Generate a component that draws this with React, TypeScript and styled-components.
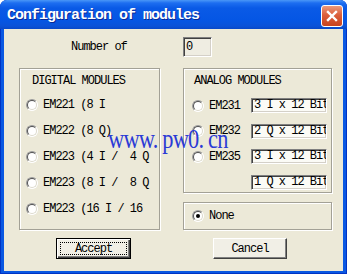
import React from 'react';
import styled, { createGlobalStyle, css } from 'styled-components';

const UI_FONT = `"Liberation Mono", "DejaVu Sans Mono", monospace`;

const GlobalStyle = createGlobalStyle`
  html, body {
    margin: 0;
    padding: 0;
    background: #fff;
  }
  body {
    width: 347px;
    height: 274px;
    overflow: hidden;
  }
`;

const Window = styled.div`
  position: relative;
  width: 347px;
  height: 274px;
  box-sizing: border-box;
  display: flex;
  flex-direction: column;
  background: #0a58e2;
  border-radius: 7px 7px 0 0;
  box-shadow: inset 0 0 0 1px #0033c4;
  overflow: hidden;
  font-family: ${UI_FONT};
  font-size: 12px;
  letter-spacing: -1px;
  color: #000;
`;

const TitleBar = styled.div`
  flex: none;
  height: 29px;
  display: flex;
  align-items: center;
  justify-content: space-between;
  padding: 0 4px 0 7px;
  background: linear-gradient(
    to bottom,
    #4a97f7 0px,
    #1d6ef0 3px,
    #0a5ae6 8px,
    #0556e4 20px,
    #0a52d8 26px,
    #0848c8 29px
  );
`;

const TitleText = styled.div`
  margin-top: 2px;
  font-size: 15px;
  font-weight: bold;
  letter-spacing: -1px;
  color: #fff;
  text-shadow: 1px 1px 0 #0a2a96;
  white-space: nowrap;
`;

const CloseButton = styled.div`
  box-sizing: border-box;
  width: 22px;
  height: 22px;
  margin-top: 3px;
  display: flex;
  align-items: center;
  justify-content: center;
  border: 1px solid #fff;
  border-radius: 3px;
  background: linear-gradient(to bottom, #eb9a7c 0%, #dc5f3c 45%, #c8431f 100%);
`;

const Client = styled.div`
  flex: 1;
  margin: 0 4px 3px;
  padding: 8px 11px 0 15px;
  display: flex;
  flex-direction: column;
  background: #ece9d8;
`;

const Columns = styled.div<{ $top?: number; $height: number }>`
  display: grid;
  grid-template-columns: 141px 149px;
  column-gap: 23px;
  height: ${p => p.$height}px;
  margin-top: ${p => p.$top ?? 0}px;
  align-items: center;
`;

const NumberLabel = styled.div`
  padding-left: 52px;
  line-height: 14px;
`;

const Field = styled.div<{ $width: number; $height: number; $bg: string }>`
  box-sizing: border-box;
  width: ${p => p.$width}px;
  height: ${p => p.$height}px;
  padding-left: 2px;
  border: 1px solid;
  border-color: #7f7f7f #fff #fff #7f7f7f;
  box-shadow: inset 1px 1px 0 #404040, inset -1px -1px 0 #d4d0c8;
  background: ${p => p.$bg};
  line-height: ${p => p.$height - 2}px;
  white-space: pre;
  overflow: hidden;
`;

const GroupBox = styled.div<{ $height: number; $left: number }>`
  box-sizing: border-box;
  height: ${p => p.$height}px;
  padding: 4.5px 0 0 ${p => p.$left}px;
  border: 1px solid #a3a196;
  box-shadow: inset 1px 1px 0 #fff, 1px 1px 0 #fff;
`;

const GroupTitle = styled.div<{ $indent: number; $gap: number }>`
  line-height: 14px;
  margin-left: ${p => p.$indent}px;
  margin-bottom: ${p => p.$gap}px;
  white-space: pre;
`;

const RadioList = styled.div`
  display: flex;
  flex-direction: column;
  gap: 10px;
`;

const RadioRow = styled.div`
  display: flex;
  align-items: center;
  gap: 5px;
  height: 16px;
  white-space: pre;
`;

const RadioDot = styled.span<{ $checked?: boolean }>`
  position: relative;
  flex: none;
  box-sizing: border-box;
  width: 12px;
  height: 12px;
  border-radius: 50%;
  border: 1px solid;
  border-color: #9a9a9a #fff #fff #9a9a9a;
  background: #fff;

  &::before {
    content: '';
    position: absolute;
    inset: 0;
    box-sizing: border-box;
    border-radius: 50%;
    border: 1px solid;
    border-color: #505050 #dcd9cc #dcd9cc #505050;
  }

  ${p =>
    p.$checked &&
    css`
      &::after {
        content: '';
        position: absolute;
        left: 3px;
        top: 3px;
        width: 4px;
        height: 4px;
        border-radius: 50%;
        background: #000;
      }
    `}
`;

const RightColumn = styled.div`
  align-self: start;
  display: flex;
  flex-direction: column;
  gap: 9px;
`;

const AnalogGrid = styled.div`
  display: grid;
  grid-template-columns: 17px 42px 76px;
  grid-auto-rows: 15px;
  row-gap: 10.5px;
  align-items: center;
`;

const AnalogLabel = styled.span`
  line-height: 14px;
  white-space: pre;
`;

const NoneBox = styled(GroupBox)`
  display: flex;
  align-items: center;
  gap: 5px;
  padding-top: 0;
  line-height: 14px;
`;

const Button = styled.div<{ $offset: number; $width: number; $default?: boolean }>`
  position: relative;
  box-sizing: border-box;
  width: ${p => p.$width}px;
  height: 21px;
  margin-left: ${p => p.$offset}px;
  display: flex;
  align-items: center;
  justify-content: center;
  background: #f1efe6;
  border: 1px solid;
  border-color: #fff #404040 #404040 #fff;
  box-shadow: inset -1px -1px 0 #808080;
  line-height: 14px;

  ${p =>
    p.$default &&
    css`
      border-color: #000;
      box-shadow: inset 1px 1px 0 #fff, inset -1px -1px 0 #404040, inset -2px -2px 0 #808080;

      &::after {
        content: '';
        position: absolute;
        inset: 3px;
        border: 1px dotted #000;
      }
    `}
`;

// watermark stamped over the dialog
const Watermark = styled.div`
  position: absolute;
  left: 108px;
  top: 125px;
  font-family: "Liberation Serif", "DejaVu Serif", serif;
  font-size: 28px;
  line-height: 28px;
  letter-spacing: -1px;
  color: #2a3ad6;
  white-space: pre;
  transform: scaleX(0.8);
  transform-origin: left center;
  pointer-events: none;
`;

const digitalModules = [
  'EM221 (8 I',
  'EM222 (8 Q)',
  'EM223 (4 I /  4 Q',
  'EM223 (8 I /  8 Q',
  'EM223 (16 I / 16',
];

const analogModules = [
  { name: 'EM231', spec: '3 I x 12 Bit' },
  { name: 'EM232', spec: '2 Q x 12 Bit' },
  { name: 'EM235', spec: '3 I x 12 Bit' },
  { name: '', spec: '1 Q x 12 Bit' },
];

const App = () => {
  return (
    <>
      <GlobalStyle />
      <Window>
        <TitleBar>
          <TitleText>Configuration of modules</TitleText>
          <CloseButton>
            <svg width="12" height="12" viewBox="0 0 12 12">
              <path d="M2 2 L10 10 M10 2 L2 10" stroke="#fff" strokeWidth="2.4" strokeLinecap="square" />
            </svg>
          </CloseButton>
        </TitleBar>
        <Client>
          <Columns $height={20}>
            <NumberLabel>Number of</NumberLabel>
            <Field $width={29} $height={20} $bg="#efede2">0</Field>
          </Columns>
          <Columns $top={11} $height={162}>
            <GroupBox $height={162} $left={6}>
              <GroupTitle $indent={6} $gap={9.5}>DIGITAL MODULES</GroupTitle>
              <RadioList>
                {digitalModules.map(label => (
                  <RadioRow key={label}>
                    <RadioDot />
                    <span>{label}</span>
                  </RadioRow>
                ))}
              </RadioList>
            </GroupBox>
            <RightColumn>
              <GroupBox $height={125} $left={8}>
                <GroupTitle $indent={2} $gap={10.5}>ANALOG MODULES</GroupTitle>
                <AnalogGrid>
                  {analogModules.map(m => (
                    <React.Fragment key={m.spec + m.name}>
                      {m.name ? <RadioDot /> : <span />}
                      <AnalogLabel>{m.name}</AnalogLabel>
                      <Field $width={76} $height={15} $bg="#fbfbf6">{m.spec}</Field>
                    </React.Fragment>
                  ))}
                </AnalogGrid>
              </GroupBox>
              <NoneBox $height={28} $left={8}>
                <RadioDot $checked />
                <span>None</span>
              </NoneBox>
            </RightColumn>
          </Columns>
          <Columns $top={8} $height={21}>
            <Button $offset={37} $width={75} $default>Accept</Button>
            <Button $offset={30} $width={74}>Cancel</Button>
          </Columns>
        </Client>
        <Watermark>www. pw0. cn</Watermark>
      </Window>
    </>
  );
};

export default App;
